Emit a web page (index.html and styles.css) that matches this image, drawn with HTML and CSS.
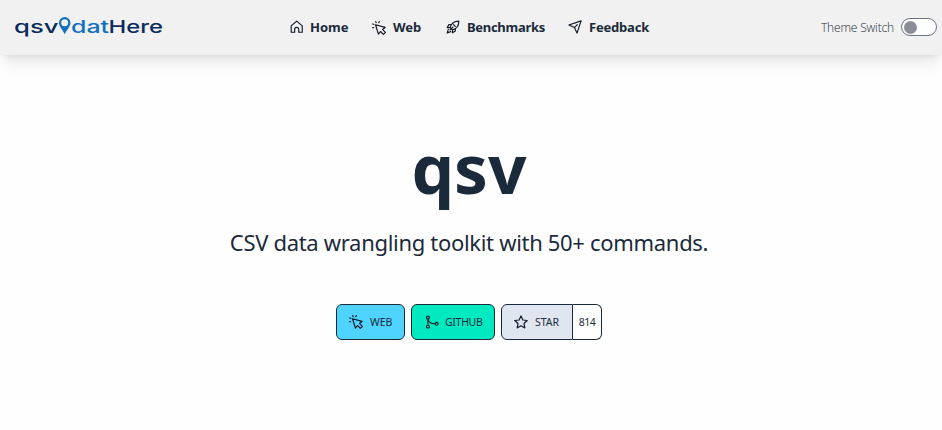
FILE: index.html
```html
<!DOCTYPE html>
<html lang="en">
<head>
<meta charset="utf-8">
<title>qsv</title>
<link rel="stylesheet" href="styles.css">
</head>
<body>
<svg class="defs" aria-hidden="true">
  <symbol id="click" viewBox="0 0 24 24"><path d="M6 6.500l16.500 4.500-4.500 3.500 5 5-3.500 3.500-5-5-3.500 4.500zM.8 11.500h2.200M1.500 5l1.700 1M6.500 1l.6 2M12.500 1l-.8 2"/></symbol>
</svg>
<header class="header">
  <a class="logo">
    <svg width="150" height="28" viewBox="0 0 150 28">
      <g class="logo-text">
        <text class="navy" x="-1" y="19.500" textLength="44.500" lengthAdjust="spacingAndGlyphs">qsv</text>
        <text class="blue" x="56" y="19.500" textLength="38" lengthAdjust="spacingAndGlyphs">dat</text>
        <text class="navy" x="93.500" y="19.500" textLength="54.500" lengthAdjust="spacingAndGlyphs">Here</text>
      </g>
      <path class="pin" fill-rule="evenodd" d="M49.700 4a5.700 5.700 0 0 0-5.700 5.700c0 4 3.500 6.500 5.700 11.500 2.200-5 5.700-7.500 5.700-11.500A5.700 5.700 0 0 0 49.700 4zm0 2.200a3.500 3.500 0 1 1 0 7 3.500 3.500 0 0 1 0-7z"/>
    </svg>
  </a>
  <nav class="nav">
    <a class="nav-item"><svg class="icon" viewBox="0 0 24 24"><path d="M2 10L11.500 2l9.500 8v11h-6v-5a3.500 3.500 0 0 0-7 0v5H2z"/></svg><span>Home</span></a>
    <a class="nav-item"><svg class="icon low"><use href="#click"/></svg><span class="web">Web</span></a>
    <a class="nav-item"><svg class="icon" viewBox="0 0 24 24"><path d="M7 13C9 6 14 2 22 2c0 8-4 13-11 15zM9 8H5l-3 5 5 0M16 15v4l-5 3v-5M13 8l3 3M4 16l-2 6 6-2M7 17l5-5"/></svg><span class="bench">Benchmarks</span></a>
    <a class="nav-item"><svg class="icon" viewBox="0 0 24 24"><path d="M1.500 8.500l21-7-7 21-4.500-9.500zM11 13l5-5"/></svg><span class="feed">Feedback</span></a>
  </nav>
  <label class="theme"><span>Theme Switch</span><i class="switch"></i></label>
</header>
<main class="hero">
  <h1>qsv</h1>
  <p class="tagline">CSV data wrangling toolkit with 50+ commands.</p>
  <div class="actions">
    <a class="btn btn-web"><svg class="icon"><use href="#click"/></svg><span>WEB</span></a>
    <a class="btn btn-github"><svg class="icon" viewBox="0 0 24 24"><circle cx="5" cy="4.500" r="2.500"/><circle cx="5" cy="20" r="2.500"/><circle cx="20" cy="15" r="2.500"/><path d="M5 7v10M5 7c1 5 5 8 12 8"/></svg><span>GITHUB</span></a>
    <div class="star-group">
      <a class="btn star"><svg class="icon" viewBox="0 0 24 24"><path d="M12 1.500l3.200 7 7.500.9-5.600 5.200 1.500 7.500L12 18.400l-6.600 3.700 1.500-7.500L1.300 9.400l7.500-.9z"/></svg><span>STAR</span></a>
      <span class="count">814</span>
    </div>
  </div>
</main>
</body>
</html>
```

FILE: styles.css
```css
* { box-sizing: border-box; }
body {
  margin: 0;
  height: 430px;
  overflow: hidden;
  background: #fefefe;
  color: #1b2a3a;
  font-family: "Noto Sans", "Open Sans", sans-serif;
}
.defs { position: absolute; width: 0; height: 0; }
.header {
  display: grid;
  grid-template-columns: 275px 1fr auto;
  align-items: center;
  height: 55px;
  padding: 0 5px 1px 15px;
  background: #f1f1f1;
  box-shadow: 0 10px 15px -3px rgba(0, 0, 0, .1), 0 4px 6px -4px rgba(0, 0, 0, .1);
}
.logo svg { display: block; overflow: visible; }
.logo-text { font: 500 17.5px Inter, sans-serif; }
.navy { fill: #0b2d5b; }
.blue, .pin { fill: #116fbd; }
.nav {
  display: grid;
  grid-template-columns: 82px 74px 122px 90px;
}
.nav-item {
  display: flex;
  align-items: center;
  gap: 6px;
  font-size: 13px;
  font-weight: 700;
  line-height: 20px;
  white-space: nowrap;
}
.web { margin-left: 1px; }
.bench { margin-left: 1px; letter-spacing: -.3px; }
.feed { margin-left: 1px; letter-spacing: -.2px; }
.icon {
  flex: none;
  width: 14px;
  height: 14px;
  fill: none;
  stroke: #111827;
  stroke-width: 2;
  stroke-linejoin: round;
  stroke-linecap: round;
}
.low { margin-top: 2px; }
.theme {
  display: flex;
  align-items: center;
  gap: 7px;
  font: 300 12px "Open Sans", sans-serif;
  letter-spacing: -.16px;
  white-space: nowrap;
}
.switch {
  width: 36px;
  height: 18px;
  padding: 2px;
  border: 1px solid #6b7280;
  border-radius: 9px;
  background: #fff;
}
.switch::before {
  content: "";
  display: block;
  width: 13px;
  height: 13px;
  border-radius: 50%;
  background: #8b8f97;
}
.hero {
  display: flex;
  flex-direction: column;
  align-items: center;
  padding: 77px 4px 0 0;
}
h1 {
  margin: 0;
  font-size: 67.5px;
  line-height: 72px;
  font-weight: 700;
}
.tagline {
  margin: 22px 0 0;
  font-size: 22px;
  line-height: 32px;
  letter-spacing: -.31px;
  white-space: nowrap;
}
.actions {
  display: flex;
  gap: 6px;
  margin-top: 46px;
}
.btn {
  display: flex;
  align-items: center;
  gap: 7px;
  height: 36px;
  padding-left: 12px;
  border: 1px solid #1b2a3a;
  border-radius: 6px;
  font-size: 10.500px;
  white-space: nowrap;
}
.btn-web { width: 69px; background: #4fd4ff; }
.btn-github { width: 84px; gap: 6px; padding-left: 13px; background: #00e9c0; letter-spacing: -.3px; }
.star-group { display: flex; }
.star { width: 72px; border-radius: 6px 0 0 6px; background: #dfe6f0; }
.count {
  display: grid;
  place-items: center;
  width: 29px;
  border: 1px solid #1b2a3a;
  border-left: 0;
  border-radius: 0 6px 6px 0;
  background: #fff;
  font-size: 10.500px;
  letter-spacing: -.5px;
}
```
